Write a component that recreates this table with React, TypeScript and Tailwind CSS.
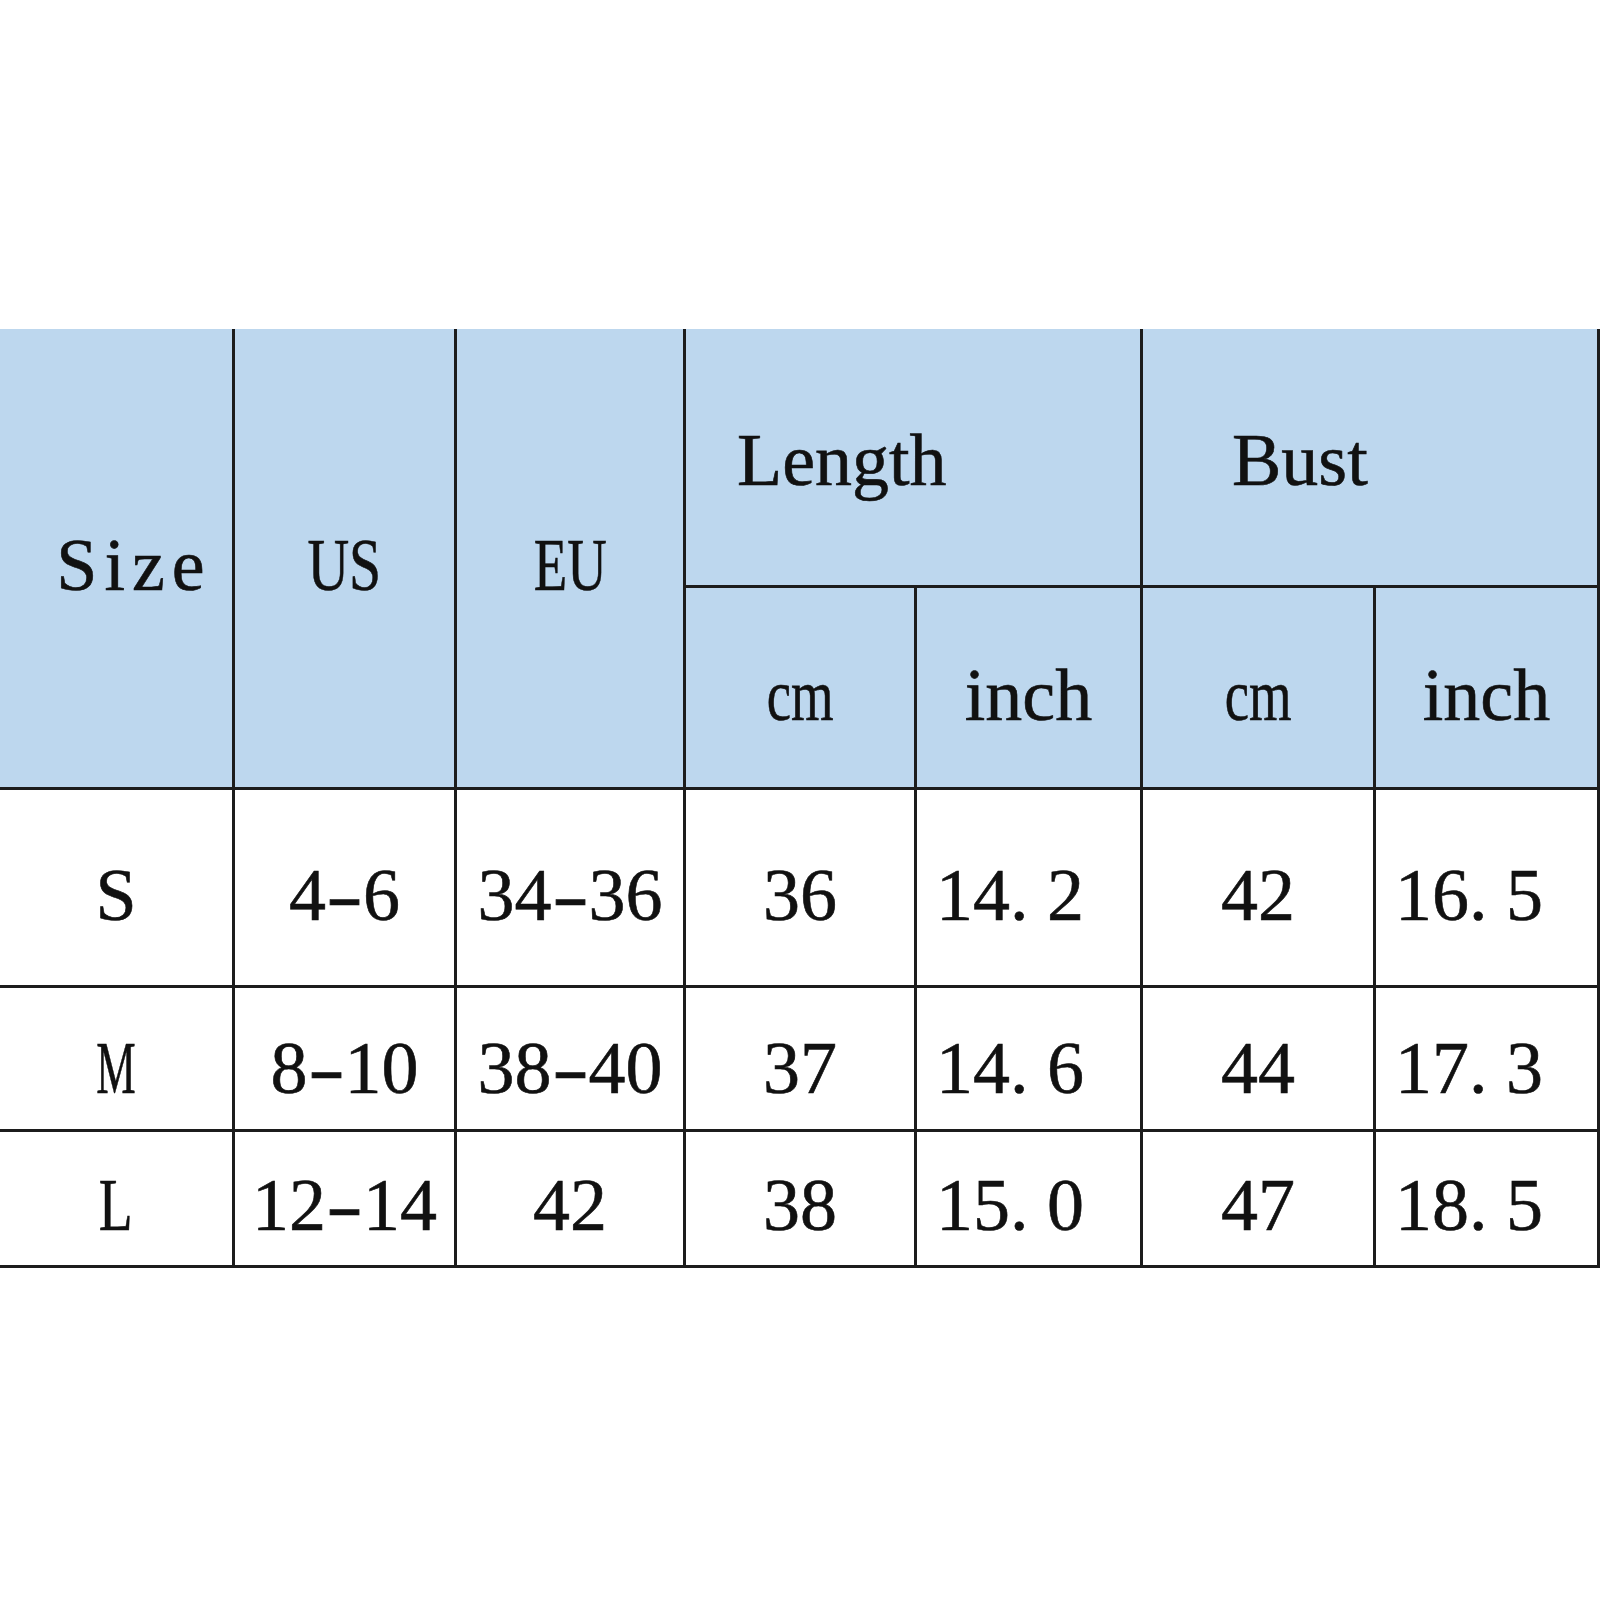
import React from "react";

type Cell = { text: string; left?: boolean; sx?: string };

const rows: { pt: string; cells: Cell[] }[] = [
  {
    pt: "pt-[15px]",
    cells: [
      { text: "S" },
      { text: "4-6" },
      { text: "34-36" },
      { text: "36" },
      { text: "14.2", left: true },
      { text: "42" },
      { text: "16.5", left: true },
    ],
  },
  {
    pt: "pt-[18px]",
    cells: [
      { text: "M", sx: "scale-x-[0.6]" },
      { text: "8-10" },
      { text: "38-40" },
      { text: "37" },
      { text: "14.6", left: true },
      { text: "44" },
      { text: "17.3", left: true },
    ],
  },
  {
    pt: "pt-[13px]",
    cells: [
      { text: "L", sx: "scale-x-[0.75]" },
      { text: "12-14" },
      { text: "42" },
      { text: "38" },
      { text: "15.0", left: true },
      { text: "47" },
      { text: "18.5", left: true },
    ],
  },
];

// period and dash each take a half-em cell, like the source font
function Num({ text }: { text: string }) {
  return (
    <>
      {text.split(/([.-])/).map((part, k) =>
        part === "." ? (
          <span key={k} className="inline-block w-[0.5em]">
            .
          </span>
        ) : part === "-" ? (
          <span key={k} className="inline-block w-[0.5em] scale-x-[1.5] text-center">
            -
          </span>
        ) : (
          part
        )
      )}
    </>
  );
}

function Txt({ children, className = "" }: { children: React.ReactNode; className?: string }) {
  return <span className={`inline-block whitespace-pre ${className}`}>{children}</span>;
}

export default function App() {
  return (
    <div className="min-h-[1600px] w-[1600px] bg-white pt-[329px]">
      <div className="grid w-[1600px] grid-cols-[232px_219px_226px_228px_223px_230px_221px] grid-rows-[256px_199px_195px_141px_133px] gap-[3px] bg-[#1c1c1c] pr-[3px] pb-[3px] font-['Liberation_Serif','Noto_Sans_CJK_SC',serif] text-[74px] leading-none text-[#111] [-webkit-text-stroke:0.6px_#111]">
        {/* header */}
        <div className="row-span-2 flex items-center justify-center bg-[#bdd7ee] pl-[36px] pt-[13px]">
          <Txt className="tracking-[7px]">Size</Txt>
        </div>
        <div className="row-span-2 flex items-center justify-center bg-[#bdd7ee] pt-[13px]">
          <Txt className="scale-x-[0.78]">US</Txt>
        </div>
        <div className="row-span-2 flex items-center justify-center bg-[#bdd7ee] pt-[13px]">
          <Txt className="scale-x-[0.74]">EU</Txt>
        </div>
        <div className="col-span-2 flex items-center bg-[#bdd7ee] pl-[51px] pt-[5px]">
          <Txt>Length</Txt>
        </div>
        <div className="col-span-2 flex items-center bg-[#bdd7ee] pl-[89px] pt-[5px]">
          <Txt>Bust</Txt>
        </div>
        <div className="flex items-center justify-center bg-[#bdd7ee] pt-[14px]">
          <Txt className="scale-x-[0.74]">cm</Txt>
        </div>
        <div className="flex items-center justify-center bg-[#bdd7ee] pt-[14px]">
          <Txt>inch</Txt>
        </div>
        <div className="flex items-center justify-center bg-[#bdd7ee] pt-[14px]">
          <Txt className="scale-x-[0.74]">cm</Txt>
        </div>
        <div className="flex items-center justify-center bg-[#bdd7ee] pt-[14px]">
          <Txt>inch</Txt>
        </div>

        {/* body */}
        {rows.map((row, i) =>
          row.cells.map((c, j) => (
            <div
              key={`${i}-${j}`}
              className={`flex items-center bg-white ${row.pt} ${c.left ? "justify-start pl-[19px]" : "justify-center"}`}
            >
              <Txt className={c.sx}>
                <Num text={c.text} />
              </Txt>
            </div>
          ))
        )}
      </div>
    </div>
  );
}
